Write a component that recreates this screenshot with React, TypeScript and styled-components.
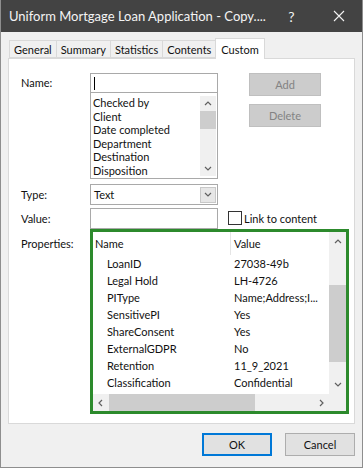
import React from "react"
import styled, { createGlobalStyle } from "styled-components"

const GlobalStyle = createGlobalStyle`
  html, body { margin: 0; padding: 0; }
  body { font-family: Lato, "Noto Sans", sans-serif; font-size: 11px; color: #111; }
`

const Window = styled.div`
  width: 363px;
  height: 468px;
  box-sizing: border-box;
  background: #f0f0f0;
  border-left: 1px solid #8e8e8e;
  border-right: 1px solid #8e8e8e;
  border-bottom: 1px solid #8e8e8e;
  display: flex;
  flex-direction: column;
  overflow: hidden;
`

const TitleBar = styled.div`
  height: 32px;
  background: #434343;
  color: #f4f4f4;
  display: flex;
  align-items: center;
  padding-left: 8px;
  font-size: 13px;
  flex-shrink: 0;
`

const Title = styled.div`
  flex: 1;
  white-space: nowrap;
  overflow: hidden;
`

const TitleButton = styled.div`
  width: 47px;
  height: 32px;
  display: flex;
  align-items: center;
  justify-content: center;
  font-size: 14px;
`

const Body = styled.div`
  flex: 1;
  display: flex;
  flex-direction: column;
  padding: 5px 7px 0 7px;
`

const TabStrip = styled.div`
  display: flex;
  align-items: flex-end;
  height: 21px;
  padding-left: 2px;
`

const Tab = styled.div<{ $active?: boolean }>`
  height: ${(p) => (p.$active ? 21 : 18)}px;
  box-sizing: border-box;
  padding: 0 ${(p) => (p.$active ? 5 : 4)}px;
  display: flex;
  align-items: center;
  background: ${(p) => (p.$active ? "#fff" : "#f0f0f0")};
  border: 1px solid #d9d9d9;
  border-bottom: ${(p) => (p.$active ? "none" : "1px solid #d9d9d9")};
  margin-left: -1px;
  position: relative;
  z-index: ${(p) => (p.$active ? 2 : 1)};
  margin-bottom: ${(p) => (p.$active ? -1 : 0)}px;
`

const Panel = styled.div`
  height: 366px;
  box-sizing: border-box;
  background: #fff;
  border: 1px solid #d9d9d9;
  padding: 14px 0 0 12px;
  display: flex;
  flex-direction: column;
`

const Row = styled.div<{ $gap?: number }>`
  display: flex;
  align-items: flex-start;
  margin-top: ${(p) => p.$gap ?? 0}px;
`

const Label = styled.div<{ $h?: number }>`
  width: 69px;
  flex-shrink: 0;
  height: ${(p) => p.$h ?? 20}px;
  line-height: ${(p) => p.$h ?? 20}px;
  word-spacing: 1px;
`

const NameBox = styled.div`
  width: 128px;
  display: flex;
  flex-direction: column;
`

const TextInput = styled.div<{ $h?: number }>`
  height: ${(p) => p.$h ?? 20}px;
  box-sizing: border-box;
  border: 1px solid #a9a9a9;
  display: flex;
  align-items: center;
  padding-left: 3px;
  background: #fff;
`

const Caret = styled.span`
  width: 1px;
  height: 13px;
  background: #000;
`

const ListBox = styled.div`
  height: 86px;
  box-sizing: border-box;
  border: 1px solid #a9a9a9;
  border-top: none;
  display: flex;
  padding: 3px 1px 2px 2px;
`

const ListItems = styled.div`
  flex: 1;
  display: flex;
  flex-direction: column;
`

const ListItem = styled.div`
  height: 13.6px;
  line-height: 13.6px;
  white-space: nowrap;
`

const VScroll = styled.div<{ $w?: number }>`
  width: ${(p) => p.$w ?? 16}px;
  display: flex;
  flex-direction: column;
  align-items: stretch;
  background: #f0f0f0;
  flex-shrink: 0;
`

const ScrollArrow = styled.div<{ $size?: number }>`
  height: ${(p) => p.$size ?? 16}px;
  display: flex;
  align-items: center;
  justify-content: center;
  flex-shrink: 0;
`

const ScrollTrack = styled.div`
  flex: 1;
  position: relative;
`

const Thumb = styled.div`
  position: absolute;
  left: 0;
  right: 0;
  background: #cdcdcd;
`

const ButtonCol = styled.div`
  margin-left: 31px;
  display: flex;
  flex-direction: column;
  gap: 8px;
`

const DisabledButton = styled.div`
  width: 72px;
  height: 23px;
  box-sizing: border-box;
  background: #cccccc;
  border: 1px solid #bfbfbf;
  color: #838383;
  display: flex;
  align-items: center;
  justify-content: center;
`

const Combo = styled.div`
  width: 128px;
  height: 21px;
  box-sizing: border-box;
  border: 1px solid #a9a9a9;
  display: flex;
  align-items: center;
  padding: 0 1px 0 3px;
`

const ComboText = styled.div`
  flex: 1;
`

const ComboButton = styled.div`
  width: 16px;
  height: 16px;
  box-sizing: border-box;
  background: #e6e6e6;
  border: 1px solid #c8c8c8;
  display: flex;
  align-items: center;
  justify-content: center;
`

const CheckWrap = styled.div`
  display: flex;
  align-items: center;
  margin-left: 10px;
  height: 20px;
  gap: 2px;
`

const CheckBox = styled.div`
  width: 14px;
  height: 14px;
  box-sizing: border-box;
  border: 1px solid #333;
  background: #fff;
`

const PropsFrame = styled.div`
  width: 259px;
  height: 185px;
  box-sizing: border-box;
  border: 3px solid #2c8a2c;
  display: flex;
  flex-direction: column;
  background: #fff;
`

const PropsMain = styled.div`
  flex: 1;
  display: flex;
  min-height: 0;
`

const PropsTable = styled.div`
  flex: 1;
  display: flex;
  flex-direction: column;
`

const HeaderRow = styled.div`
  height: 23px;
  display: grid;
  grid-template-columns: 137px 1fr;
  align-items: center;
`

const HeaderCell = styled.div<{ $divider?: boolean }>`
  padding-left: ${(p) => (p.$divider ? 3 : 2)}px;
  height: 23px;
  line-height: 23px;
  border-left: ${(p) => (p.$divider ? "1px solid #e5e5e5" : "none")};
`

const DataRow = styled.div`
  height: 17px;
  display: grid;
  grid-template-columns: 137px 1fr;
  align-items: center;
  white-space: nowrap;
`

const NameCell = styled.div`
  padding-left: 14px;
`

const ValueCell = styled.div`
  padding-left: 4px;
  overflow: hidden;
`

const HScroll = styled.div`
  height: 17px;
  display: flex;
  background: #f0f0f0;
  flex-shrink: 0;
`

const HTrack = styled.div`
  flex: 1;
  position: relative;
`

const HThumb = styled.div`
  position: absolute;
  top: 0;
  bottom: 0;
  background: #cdcdcd;
`

const HArrow = styled.div`
  width: 16px;
  display: flex;
  align-items: center;
  justify-content: center;
`

const Corner = styled.div`
  width: 17px;
  background: #f0f0f0;
`

const Footer = styled.div`
  display: flex;
  justify-content: flex-end;
  gap: 13px;
  padding-top: 9px;
`

const DialogButton = styled.div<{ $default?: boolean }>`
  width: 70px;
  height: 23px;
  box-sizing: border-box;
  background: #e1e1e1;
  border: ${(p) => (p.$default ? "2px solid #0078d7" : "1px solid #adadad")};
  display: flex;
  align-items: center;
  justify-content: center;
`

const Chevron = ({ dir, size = 8 }: { dir: "up" | "down" | "left" | "right"; size?: number }) => {
  const pts = {
    up: "1,6 4,3 7,6",
    down: "1,2 4,5 7,2",
    left: "5,1 2,4 5,7",
    right: "3,1 6,4 3,7",
  }[dir]
  return (
    <svg width={size} height={size} viewBox="0 0 8 8">
      <polyline points={pts} fill="none" stroke="#606060" strokeWidth="1.2" />
    </svg>
  )
}

const CloseIcon = () => (
  <svg width="12" height="12" viewBox="0 0 12 12">
    <path d="M1 1 L11 11 M11 1 L1 11" stroke="#f4f4f4" strokeWidth="1.1" />
  </svg>
)

const names = ["Checked by", "Client", "Date completed", "Department", "Destination", "Disposition"]

const properties = [
  ["LoanID", "27038-49b"],
  ["Legal Hold", "LH-4726"],
  ["PIType", "Name;Address;I..."],
  ["SensitivePI", "Yes"],
  ["ShareConsent", "Yes"],
  ["ExternalGDPR", "No"],
  ["Retention", "11_9_2021"],
  ["Classification", "Confidential"],
]

const tabs = ["General", "Summary", "Statistics", "Contents", "Custom"]

export default function App() {
  return (
    <>
      <GlobalStyle />
      <Window>
        <TitleBar>
          <Title>Uniform Mortgage Loan Application - Copy....</Title>
          <TitleButton>?</TitleButton>
          <TitleButton>
            <CloseIcon />
          </TitleButton>
        </TitleBar>
        <Body>
          <TabStrip>
            {tabs.map((t) => (
              <Tab key={t} $active={t === "Custom"}>
                {t}
              </Tab>
            ))}
          </TabStrip>
          <Panel>
            <Row>
              <Label>Name:</Label>
              <NameBox>
                <TextInput>
                  <Caret />
                </TextInput>
                <ListBox>
                  <ListItems>
                    {names.map((n) => (
                      <ListItem key={n}>{n}</ListItem>
                    ))}
                  </ListItems>
                  <VScroll>
                    <ScrollArrow $size={14}>
                      <Chevron dir="up" />
                    </ScrollArrow>
                    <ScrollTrack>
                      <Thumb style={{ top: 1, height: 18 }} />
                    </ScrollTrack>
                    <ScrollArrow $size={14}>
                      <Chevron dir="down" />
                    </ScrollArrow>
                  </VScroll>
                </ListBox>
              </NameBox>
              <ButtonCol>
                <DisabledButton>Add</DisabledButton>
                <DisabledButton>Delete</DisabledButton>
              </ButtonCol>
            </Row>
            <Row $gap={5}>
              <Label $h={21}>Type:</Label>
              <Combo>
                <ComboText>Text</ComboText>
                <ComboButton>
                  <Chevron dir="down" />
                </ComboButton>
              </Combo>
            </Row>
            <Row $gap={3}>
              <Label $h={21}>Value:</Label>
              <TextInput $h={21} style={{ width: 128 }} />
              <CheckWrap>
                <CheckBox />
                <span>Link to content</span>
              </CheckWrap>
            </Row>
            <Row>
              <Label $h={30} style={{ lineHeight: "30px" }}>
                Properties:
              </Label>
              <PropsFrame>
                <PropsMain>
                  <PropsTable>
                    <HeaderRow>
                      <HeaderCell>Name</HeaderCell>
                      <HeaderCell $divider>Value</HeaderCell>
                    </HeaderRow>
                    {properties.map(([k, v]) => (
                      <DataRow key={k}>
                        <NameCell>{k}</NameCell>
                        <ValueCell>{v}</ValueCell>
                      </DataRow>
                    ))}
                  </PropsTable>
                  <VScroll $w={17}>
                    <ScrollArrow $size={18}>
                      <Chevron dir="up" />
                    </ScrollArrow>
                    <ScrollTrack>
                      <Thumb style={{ top: 35, height: 77 }} />
                    </ScrollTrack>
                    <ScrollArrow $size={18}>
                      <Chevron dir="down" />
                    </ScrollArrow>
                  </VScroll>
                </PropsMain>
                <HScroll>
                  <HArrow>
                    <Chevron dir="left" />
                  </HArrow>
                  <HTrack>
                    <HThumb style={{ left: 0, width: 146 }} />
                  </HTrack>
                  <HArrow>
                    <Chevron dir="right" />
                  </HArrow>
                  <Corner />
                </HScroll>
              </PropsFrame>
            </Row>
          </Panel>
          <Footer>
            <DialogButton $default>OK</DialogButton>
            <DialogButton>Cancel</DialogButton>
          </Footer>
        </Body>
      </Window>
    </>
  )
}
